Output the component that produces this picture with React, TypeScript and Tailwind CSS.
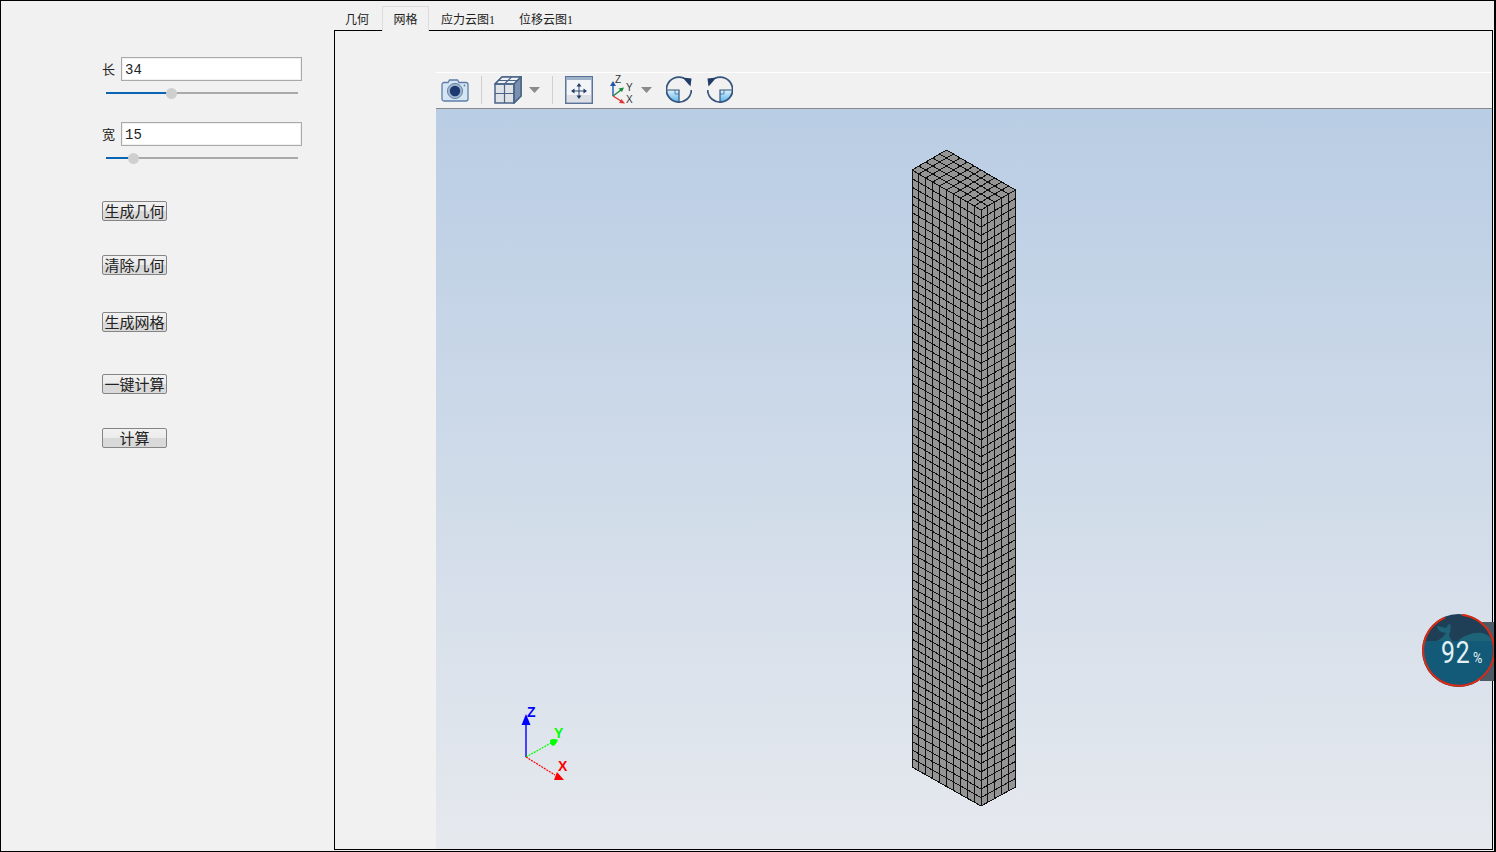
import React from "react";

const CJK = "font-['Noto_Sans_CJK_SC','Liberation_Sans',sans-serif]";

function lerp(a: number[], b: number[], t: number) {
  return [a[0] + (b[0] - a[0]) * t, a[1] + (b[1] - a[1]) * t];
}
function seg(a: number[], b: number[]) {
  return `M${a[0].toFixed(1)} ${a[1].toFixed(1)}L${b[0].toFixed(1)} ${b[1].toFixed(1)}`;
}

function Mesh() {
  const back = [946.5, 150], left = [912, 170], right = [1015.5, 190], front = [981, 210];
  const bl = [912, 767], bf = [981, 806], br = [1015.5, 787];
  const L = 10, W = 5, H = 70;
  let d = "";
  for (let i = 0; i <= L; i++) {
    const t = i / L;
    d += seg(lerp(left, front, t), lerp(bl, bf, t));
    d += seg(lerp(left, front, t), lerp(back, right, t));
  }
  for (let i = 0; i <= W; i++) {
    const t = i / W;
    d += seg(lerp(front, right, t), lerp(bf, br, t));
    d += seg(lerp(left, back, t), lerp(front, right, t));
  }
  for (let i = 0; i <= H; i++) {
    const t = i / H;
    d += seg(lerp(left, bl, t), lerp(front, bf, t));
    d += seg(lerp(front, bf, t), lerp(right, br, t));
  }
  const poly = [back, right, br, bf, bl, left].map((p) => p.join(" ")).join(" ");
  return (
    <g>
      <polygon points={poly} fill="#959595" />
      <path d={d} stroke="#111111" strokeWidth="1" fill="none" shapeRendering="crispEdges" />
    </g>
  );
}

function Triad() {
  return (
    <g>
      <path d="M526 757V720" stroke="#0000ff" strokeWidth="1.4" />
      <path d="M526 757L551 743" stroke="#00ff00" strokeWidth="1.2" strokeDasharray="2 1" />
      <path d="M526 757L555 775" stroke="#ff0000" strokeWidth="1.2" strokeDasharray="2 1" />
      <path d="M526 714L530.5 725H521.5Z" fill="#0000ff" />
      <path d="M550 740Q554 738 558 740Q556 745 553 746Q550 745 550 740Z" fill="#00ff00" />
      <path d="M557 772L564 780H554Z" fill="#ff0000" />
      <text x="527" y="717" fontSize="14" fontWeight="700" fill="#0000ff" fontFamily="Liberation Sans, sans-serif">Z</text>
      <text x="554" y="738" fontSize="14" fontWeight="700" fill="#00ff00" fontFamily="Liberation Sans, sans-serif">Y</text>
      <text x="558" y="771" fontSize="14" fontWeight="700" fill="#ff0000" fontFamily="Liberation Sans, sans-serif">X</text>
    </g>
  );
}

function Field({ label, value, pct, first }: { label: string; value: string; pct: number; first?: boolean }) {
  return (
    <div className={first ? "" : "mt-[22px]"}>
      <div className="flex items-center h-[24px]">
        <span className={`w-[19px] pb-[2px] text-[13px] leading-none text-[#222] ${CJK}`}>{label}</span>
        <div className="w-[181px] h-[24px] border border-[#a9a9a9] shadow-[inset_0_0_0_1px_#f0f0f0] bg-white pl-[3px] pt-[2px] flex items-center text-[14px] text-[#222] font-['Liberation_Mono',monospace]">
          {value}
        </div>
      </div>
      <div className="relative mt-[5px] ml-[4px] w-[192px] h-[14px] flex items-center">
        <div className="h-[2px] bg-[#0a66b5]" style={{ width: `${pct}px` }} />
        <div className="h-[2px] flex-1 bg-[#a9a9a9]" />
        <div
          className="absolute top-[2px] w-[11px] h-[11px] rounded-full bg-[#cfcfcf]"
          style={{ left: `${pct - 5}px` }}
        />
      </div>
    </div>
  );
}

function Btn({ text, mt }: { text: string; mt: string }) {
  return (
    <button
      className={`${mt} w-[65px] h-[20px] pb-[2px] border border-[#858585] rounded-[2px] bg-[linear-gradient(#f1f1f1_0%,#ececec_50%,#d9d9d9_51%,#d9d9d9_100%)] text-[15px] leading-none text-[#222] flex items-center justify-center ${CJK}`}
    >
      {text}
    </button>
  );
}

function Camera() {
  return (
    <svg width="28" height="24" viewBox="0 0 28 24">
      <path d="M1 6.5a2 2 0 0 1 2-2h4l1.5-2.5h8L18 4.5h7a2 2 0 0 1 2 2V21a2 2 0 0 1-2 2H3a2 2 0 0 1-2-2Z" fill="#d6e5f4" stroke="#5d7ea6" strokeWidth="1.3" />
      <circle cx="14" cy="13" r="7.6" fill="#9fb6cf" stroke="#6a86a8" />
      <circle cx="14" cy="13" r="5.2" fill="#1d3a70" />
      <circle cx="23.5" cy="7.5" r="1" fill="#6a86a8" />
    </svg>
  );
}
function Cube() {
  return (
    <svg width="28" height="28" viewBox="0 0 28 28" fill="none" stroke="#4a6488" strokeWidth="1.5">
      <path d="M1 8L8 1H27V20L20 27H1Z" fill="#dfe3e8" />
      <path d="M1 8L8 1H27L20 8Z" fill="#eef1f4" />
      <path d="M20 8L27 1V20L20 27Z" fill="#7b90ac" />
      <path d="M1 8H20V27" />
      <path d="M1 17.5H20M10.5 8V27M10.5 8L17.5 1M4.5 4.5H23.5" strokeWidth="1.2" />
    </svg>
  );
}
function Arrow() {
  return (
    <svg width="11" height="6" viewBox="0 0 11 6">
      <path d="M0 0H11L5.5 6Z" fill="#8b8b8b" />
    </svg>
  );
}
function Fit() {
  return (
    <svg width="28" height="28" viewBox="0 0 28 28">
      <rect x="0.75" y="0.75" width="26.5" height="26.5" fill="#f2f4f7" stroke="#5a7396" strokeWidth="1.5" />
      <rect x="1" y="1" width="26" height="3" fill="#9db1c9" />
      <rect x="2" y="19" width="24" height="7" fill="#dcdfe3" />
      <path d="M14 9V21M8 15H20" stroke="#2f4a70" strokeWidth="1" />
      <path d="M14 7L16.5 10.5H11.5ZM14 23L16.5 19.5H11.5ZM6 15L9.5 12.5V17.5ZM22 15L18.5 12.5V17.5Z" fill="#1f3d66" />
    </svg>
  );
}
function Axes() {
  return (
    <svg width="24" height="28" viewBox="0 0 24 28" className="overflow-visible">
      <path d="M3 20V8" stroke="#1f56b0" strokeWidth="1.4" />
      <path d="M3 5L6 10H0Z" fill="#1f56b0" />
      <path d="M3 20L11 14" stroke="#1d8a3a" strokeWidth="1.4" />
      <path d="M14 11.5L12 16L8.5 12.5Z" fill="#1d8a3a" />
      <path d="M3 20L11 25" stroke="#e23434" strokeWidth="1.4" />
      <path d="M15 27.5L9 27L11.5 23Z" fill="#e23434" />
      <text x="5" y="7" fontSize="10" fill="#333" fontFamily="Liberation Sans, sans-serif">Z</text>
      <text x="16" y="15" fontSize="10" fill="#333" fontFamily="Liberation Sans, sans-serif">Y</text>
      <text x="16" y="27" fontSize="10" fill="#333" fontFamily="Liberation Sans, sans-serif">X</text>
    </svg>
  );
}
function Rotate({ flip }: { flip?: boolean }) {
  const id = flip ? "rg2" : "rg1";
  return (
    <svg width="26" height="28" viewBox="0 0 26 28" style={flip ? { transform: "scaleX(-1)" } : undefined}>
      <defs>
        <linearGradient id={id} x1="0" y1="0" x2="0" y2="1">
          <stop offset="0" stopColor="#e0f1fb" />
          <stop offset="1" stopColor="#58b6ee" />
        </linearGradient>
      </defs>
      <path d="M1 14A12 12 0 0 0 13 26V14Z" fill={`url(#${id})`} />
      <path d="M9 14V18H13" fill="none" stroke="#4a87b5" strokeWidth="1" />
      <path d="M1 14H13V26" fill="none" stroke="#36557d" strokeWidth="1.2" />
      <path d="M18 2.2A12.5 12.5 0 1 0 25.4 14" fill="none" stroke="#36557d" strokeWidth="1.8" />
      <path d="M16.5 1.5L25.5 2.5L24.5 10.5Z" fill="#1f3d66" />
    </svg>
  );
}
function Sep() {
  return <div className="w-px h-[28px] bg-[#d0d0d0]" />;
}

function Badge() {
  return (
    <div className="absolute left-[1421px] top-[612px] w-[72px] h-[76px] overflow-hidden pointer-events-none">
      <div className="absolute right-0 top-[9px] w-[14px] h-[59px] bg-[#4d5965]" />
      <svg className="absolute inset-0" width="72" height="76" viewBox="0 0 72 76">
        <defs>
          <clipPath id="c">
            <circle cx="36.5" cy="37.5" r="36" />
          </clipPath>
        </defs>
        <circle cx="36.5" cy="37.5" r="36.5" fill="#1e3f55" />
        <g clipPath="url(#c)">
          <rect x="0" y="28" width="74" height="49" fill="#135a78" />
          <path d="M36 28C42 22 52 19 60 20C66 21 69 25 71 28Z" fill="#1d6478" />
          <path d="M15 28C19 26 22 23 24 20C20 20 15 17 15 13C18 14 21 14 24 15C25 13 27 11 28 10C29 14 29 18 27 22C28 25 29 27 31 28Z" fill="#1d6478" />
        </g>
        <path d="M40 2A35.5 35.5 0 1 1 23 4.6" fill="none" stroke="#de2a12" strokeWidth="2" />
      </svg>
      <div className="absolute left-[19px] top-[20px] flex items-baseline text-[#e4f0f4] font-['Roboto',sans-serif]">
        <span className="text-[31px] leading-[40px] font-normal tracking-[1px] inline-block scale-x-[0.8] origin-left w-[32px]">92</span>
        <span className="text-[15px] leading-none font-normal inline-block scale-x-[0.85] origin-left">%</span>
      </div>
    </div>
  );
}

export default function App() {
  return (
    <div className="relative w-[1496px] h-[852px] overflow-hidden flex border-t border-l border-r-2 border-b border-black bg-[#f1f1f1]">
      <div className="w-[333px] shrink-0 pl-[101px] pt-[56px] flex flex-col items-start">
        <Field label="长" value="34" pct={65} first />
        <Field label="宽" value="15" pct={27} />
        <Btn text="生成几何" mt="mt-[36px]" />
        <Btn text="清除几何" mt="mt-[34px]" />
        <Btn text="生成网格" mt="mt-[37px]" />
        <Btn text="一键计算" mt="mt-[42px]" />
        <Btn text="计算" mt="mt-[34px]" />
      </div>
      <div className="flex-1 min-w-0 flex flex-col pb-[1px] pr-[1px]">
        <div className={`h-[29px] flex items-end text-[12px] text-[#222] ${CJK}`}>
          <div className="ml-[11px] w-[24px] h-[24px] leading-[26px]">几何</div>
          <div className="relative top-[1px] ml-[13px] w-[47px] h-[25px] border border-b-0 border-[#dcdcdc] bg-[#f1f1f1] text-center leading-[23px]">网格</div>
          <div className="ml-[12px] w-[54px] h-[24px] leading-[28px] whitespace-nowrap font-['Liberation_Serif','Noto_Sans_CJK_SC',serif]">应力云图1</div>
          <div className="ml-[24px] w-[54px] h-[24px] leading-[28px] whitespace-nowrap font-['Liberation_Serif','Noto_Sans_CJK_SC',serif]">位移云图1</div>
        </div>
        <div className="flex-1 min-h-0 border border-black pl-[101px] pt-[41px] flex flex-col">
          <div className="h-[37px] shrink-0 border-t border-t-white border-b border-b-[#8a8a8a] bg-[#f1f1f1] flex items-center pl-[5px] pb-[1px]">
            <Camera />
            <div className="ml-[12px]"><Sep /></div>
            <div className="ml-[12px] flex"><Cube /></div>
            <div className="ml-[7px] flex"><Arrow /></div>
            <div className="ml-[12px]"><Sep /></div>
            <div className="ml-[12px] flex"><Fit /></div>
            <div className="ml-[17px] flex"><Axes /></div>
            <div className="ml-[7px] flex"><Arrow /></div>
            <div className="ml-[14px] flex"><Rotate /></div>
            <div className="ml-[15px] flex"><Rotate flip /></div>
          </div>
          <div className="flex-1 min-h-0 relative bg-[linear-gradient(#b9cde4,#e6e9ee)]">
            <svg className="absolute inset-0 w-full h-full" viewBox="436 109 1056 740" preserveAspectRatio="xMinYMin meet">
              <Mesh />
              <Triad />
            </svg>
          </div>
        </div>
      </div>
      <Badge />
    </div>
  );
}
